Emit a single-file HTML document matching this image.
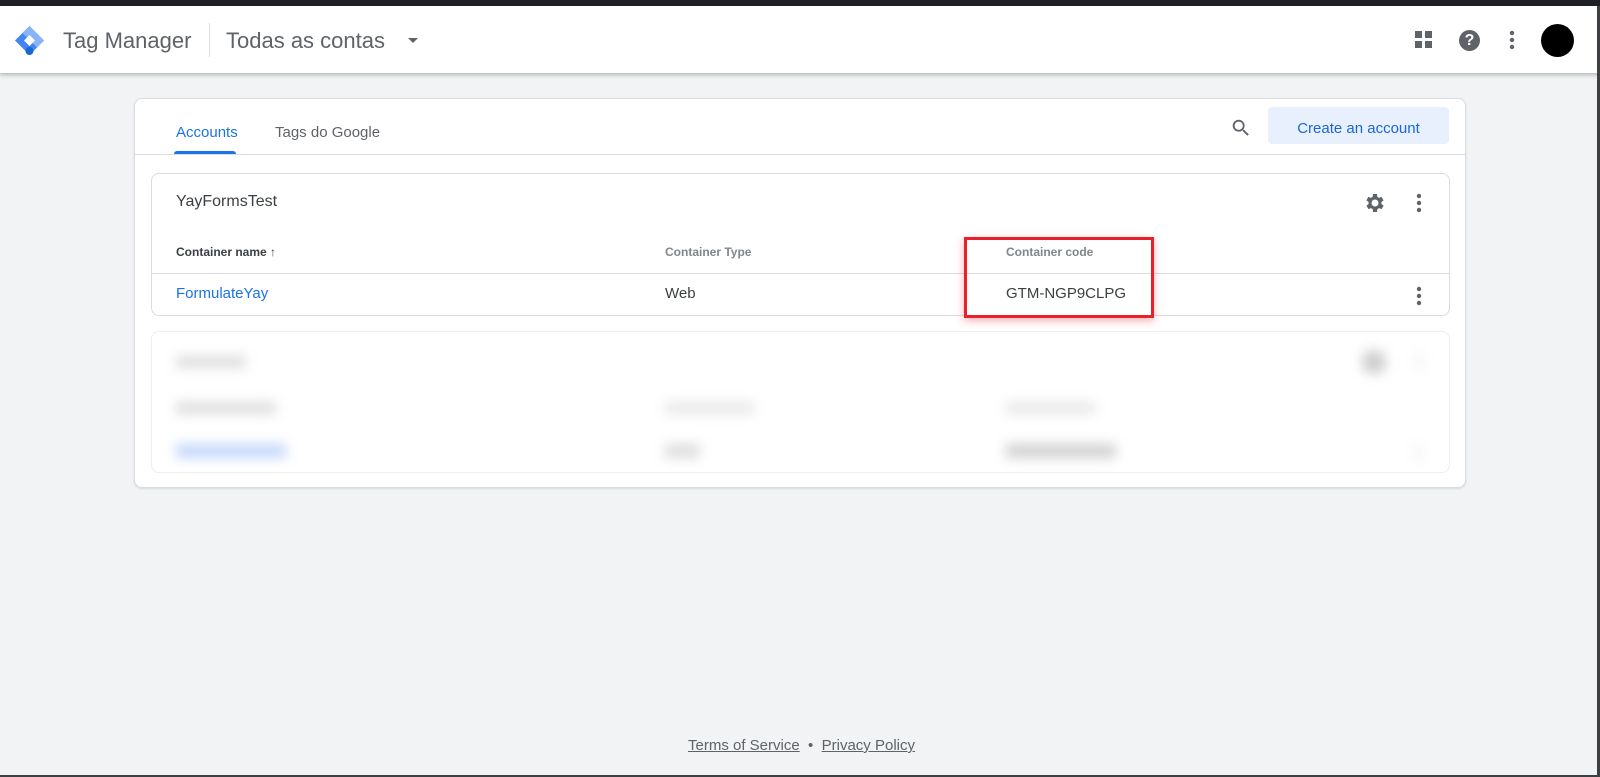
<!DOCTYPE html>
<html><head><meta charset="utf-8"><style>
*{box-sizing:border-box;margin:0;padding:0}
body{width:1600px;height:777px;overflow:hidden;background:#f1f3f4;font-family:"Liberation Sans",Arial,sans-serif;position:relative;color:#202124}
.abs{position:absolute}
#top{left:0;top:0;width:1600px;height:6px;background:#202124}
#hdr{left:0;top:6px;width:1600px;height:67px;background:#fff;box-shadow:0 2px 4px rgba(0,0,0,.25)}
.t{white-space:nowrap}
.card{background:#fff;border:1px solid #dadce0;border-radius:8px}
.hd{font-size:12px;font-weight:bold;color:#3c4043}
.hd2{font-size:12px;font-weight:bold;color:#80868b}
</style></head><body>
<div id="top" class="abs"></div>
<div id="hdr" class="abs">
<svg class="abs" style="left:13px;top:18px" width="33" height="33" viewBox="0 0 33 33">
<path d="M16.5 2 L31 16.5 L16.5 31 L2 16.5Z" fill="#4285f4"/>
<path d="M16.5 2 L31 16.5 L24 23.5 L9.5 9Z" fill="#8ab4f8"/>
<path d="M16.5 11 L22 16.5 L16.5 22 L11 16.5Z" fill="#fff"/>
<circle cx="16.5" cy="27" r="4" fill="#1967d2"/>
</svg>
<div class="abs t" style="left:63px;top:22px;font-size:22px;color:#5f6368">Tag Manager</div>
<div class="abs" style="left:209px;top:17px;width:1px;height:34px;background:#dadce0"></div>
<div class="abs t" style="left:226px;top:22px;font-size:22px;color:#5f6368">Todas as contas</div>
<div class="abs" style="left:408px;top:32px;border-left:5px solid transparent;border-right:5px solid transparent;border-top:5px solid #5f6368"></div>
<svg class="abs" style="left:1415px;top:25px" width="18" height="18"><rect x="0" y="0" width="7" height="7" fill="#5f6368"/><rect x="10" y="0" width="7" height="7" fill="#5f6368"/><rect x="0" y="10" width="7" height="7" fill="#5f6368"/><rect x="10" y="10" width="7" height="7" fill="#5f6368"/></svg>
<div class="abs" style="left:1459px;top:24px;width:21px;height:21px;border-radius:50%;background:#5f6368;color:#fff;font-weight:bold;font-size:16px;text-align:center;line-height:21px">?</div>
<svg class="abs" style="left:1509px;top:24px" width="6" height="20"><circle cx="3" cy="3" r="2.2" fill="#5f6368"/><circle cx="3" cy="10" r="2.2" fill="#5f6368"/><circle cx="3" cy="17" r="2.2" fill="#5f6368"/></svg>
<div class="abs" style="left:1541px;top:18px;width:33px;height:33px;border-radius:50%;background:#000"></div>
</div>
<div class="abs" style="right:0;top:6px;width:3px;height:771px;background:#3c4043"></div>
<div class="abs" style="left:0;bottom:0;width:1600px;height:2px;background:#3c4043"></div>

<div class="abs card" style="left:134px;top:98px;width:1332px;height:390px;box-shadow:0 1px 2px rgba(0,0,0,.1)">
<div class="abs t" style="left:41px;top:25px;font-size:15px;color:#1a73e8">Accounts</div>
<div class="abs" style="left:39px;top:52px;width:62px;height:3px;background:#1a73e8;border-radius:3px 3px 0 0"></div>
<div class="abs t" style="left:140px;top:25px;font-size:15px;color:#5f6368">Tags do Google</div>
<div class="abs" style="left:0;top:55px;width:1330px;height:1px;background:#dadce0"></div>
<svg class="abs" style="left:1095px;top:18px" width="22" height="22" viewBox="0 0 24 24"><path d="M15.5 14h-.8l-.3-.3A6.5 6.5 0 1 0 9.5 16a6.5 6.5 0 0 0 4.2-1.6l.3.3v.8l5 5 1.5-1.5-5-5zm-6 0A4.5 4.5 0 1 1 14 9.5 4.5 4.5 0 0 1 9.5 14z" fill="#5f6368"/></svg>
<div class="abs t" style="left:1133px;top:8px;width:181px;height:37px;background:#e8f0fe;border-radius:4px;color:#1967d2;font-size:15px;text-align:center;line-height:43px">Create an account</div>

<div class="abs card" style="left:16px;top:74px;width:1299px;height:143px">
<div class="abs t" style="left:24px;top:19px;font-size:16px;color:#3c4043">YayFormsTest</div>
<svg class="abs" style="left:1211px;top:17px" width="24" height="24" viewBox="0 0 24 24"><path d="M19.4 13a7.5 7.5 0 0 0 0-2l2.1-1.6-2-3.5-2.5 1a7 7 0 0 0-1.7-1L15 3h-4l-.4 2.9a7 7 0 0 0-1.7 1l-2.5-1-2 3.5L6.6 11a7.5 7.5 0 0 0 0 2l-2.1 1.6 2 3.5 2.5-1a7 7 0 0 0 1.7 1L11 21h4l.4-2.9a7 7 0 0 0 1.7-1l2.5 1 2-3.5zM13 15.5a3.5 3.5 0 1 1 0-7 3.5 3.5 0 0 1 0 7z" fill="#5f6368" transform="translate(-1 0)"/></svg>
<svg class="abs" style="left:1264px;top:19px" width="6" height="20"><circle cx="3" cy="3" r="2.2" fill="#5f6368"/><circle cx="3" cy="10" r="2.2" fill="#5f6368"/><circle cx="3" cy="17" r="2.2" fill="#5f6368"/></svg>
<div class="abs t hd" style="left:24px;top:71px">Container name &#8593;</div>
<div class="abs t hd2" style="left:513px;top:71px">Container Type</div>
<div class="abs t hd2" style="left:854px;top:71px">Container code</div>
<div class="abs" style="left:0;top:99px;width:1297px;height:1px;background:#dadce0"></div>
<div class="abs t" style="left:24px;top:111px;font-size:15px;color:#1a73e8">FormulateYay</div>
<div class="abs t" style="left:513px;top:111px;font-size:15px;color:#3c4043">Web</div>
<div class="abs t" style="left:854px;top:111px;font-size:15px;color:#3c4043">GTM-NGP9CLPG</div>
<svg class="abs" style="left:1264px;top:112px" width="6" height="20"><circle cx="3" cy="3" r="2.2" fill="#5f6368"/><circle cx="3" cy="10" r="2.2" fill="#5f6368"/><circle cx="3" cy="17" r="2.2" fill="#5f6368"/></svg>
</div>

<div class="abs card" style="left:16px;top:232px;width:1299px;height:142px;border-color:#eee">
<div style="filter:blur(6px)">
<div class="abs" style="left:24px;top:24px;width:70px;height:12px;background:#ddd"></div>
<div class="abs" style="left:1210px;top:18px;width:24px;height:24px;border-radius:50%;background:#ccc"></div>
<div class="abs" style="left:1264px;top:20px;width:5px;height:18px;background:#eee"></div>
<div class="abs" style="left:24px;top:70px;width:100px;height:12px;background:#ddd"></div>
<div class="abs" style="left:513px;top:70px;width:90px;height:12px;background:#e8e8e8"></div>
<div class="abs" style="left:854px;top:70px;width:90px;height:12px;background:#e8e8e8"></div>
<div class="abs" style="left:24px;top:112px;width:110px;height:14px;background:#c4d7fa"></div>
<div class="abs" style="left:513px;top:112px;width:35px;height:14px;background:#ddd"></div>
<div class="abs" style="left:854px;top:112px;width:110px;height:14px;background:#d0d0d0"></div>
<div class="abs" style="left:1264px;top:112px;width:5px;height:18px;background:#eee"></div>
</div>
</div>
</div>

<div class="abs" style="left:964px;top:237px;width:190px;height:81px;border:3px solid #e8202a;box-shadow:0 3px 8px rgba(232,32,42,.35)"></div>

<div class="abs t" style="left:688px;top:737px;font-size:15px;color:#5f6368"><span style="text-decoration:underline">Terms of Service</span> &nbsp;•&nbsp; <span style="text-decoration:underline">Privacy Policy</span></div>
</body></html>
